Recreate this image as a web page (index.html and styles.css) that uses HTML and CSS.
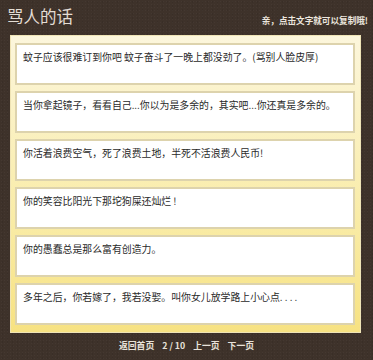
FILE: index.html
```html
<!DOCTYPE html>
<html lang="zh-CN">
<head>
  <meta charset="UTF-8">
  <meta name="viewport" content="width=device-width, initial-scale=1.0">
  <title>骂人的话</title>
  <link rel="stylesheet" href="styles.css">
</head>
<body>
  <div class="header">
    <h1>骂人的话</h1>
    <span class="tip">亲，点击文字就可以复制哦!</span>
  </div>
  <div class="panel">
    <div class="card">蚊子应该很难订到你吧 蚊子奋斗了一晚上都没劲了。(骂别人脸皮厚)</div>
    <div class="card">当你拿起镜子，看看自己...你以为是多余的，其实吧...你还真是多余的。</div>
    <div class="card">你活着浪费空气，死了浪费土地，半死不活浪费人民币!</div>
    <div class="card">你的笑容比阳光下那坨狗屎还灿烂 !</div>
    <div class="card">你的愚蠢总是那么富有创造力。</div>
    <div class="card">多年之后，你若嫁了，我若没娶。叫你女儿放学路上小心点. . . .</div>
  </div>
  <div class="footer">
    <a href="#">返回首页</a>
    <span class="page">2 / 10</span>
    <a href="#">上一页</a>
    <a href="#">下一页</a>
  </div>
</body>
</html>
```

FILE: styles.css
```css
body {
  margin: 0;
  font-family: "Noto Sans CJK SC", "Liberation Sans", sans-serif;
  background-color: #3e322a;
  background-image:
    radial-gradient(rgba(255,255,255,0.03) 1px, transparent 1px),
    radial-gradient(rgba(0,0,0,0.08) 1px, transparent 1px);
  background-size: 3px 3px, 5px 4px;
}
.header {
  display: flex;
  justify-content: space-between;
  align-items: center;
  height: 35px;
  padding: 0 5px 0 7px;
  box-sizing: border-box;
}
h1 {
  margin: 0;
  font-size: 16.5px;
  font-weight: normal;
  color: #e4ddd4;
  line-height: 1;
  margin-top: -3px;
}
.tip {
  font-size: 8.6px;
  font-weight: bold;
  color: #ece6de;
  margin-top: 5px;
}
.panel {
  margin: 0 12px 0 10px;
  padding: 7px 5px 7px 4px;
  border: 1px solid #efe4b6;
  background: linear-gradient(#fcf6dc, #f9eba4 65%, #f7e282);
  display: flex;
  flex-direction: column;
  gap: 6px;
}
.card {
  height: 42px;
  box-sizing: border-box;
  border: 2px solid #ddd3ad;
  background-color: #fff;
  padding: 6px;
  font-size: 9.9px;
  line-height: 12px;
  color: #2a2a2a;
}
.footer {
  text-align: center;
  height: 26px;
  line-height: 26px;
  font-size: 8.8px;
  font-weight: bold;
  color: #e8e2da;
}
.footer a {
  color: #e8e2da;
  text-decoration: none;
  margin: 0 3px;
}
.page {
  margin: 0 3px;
}
```
